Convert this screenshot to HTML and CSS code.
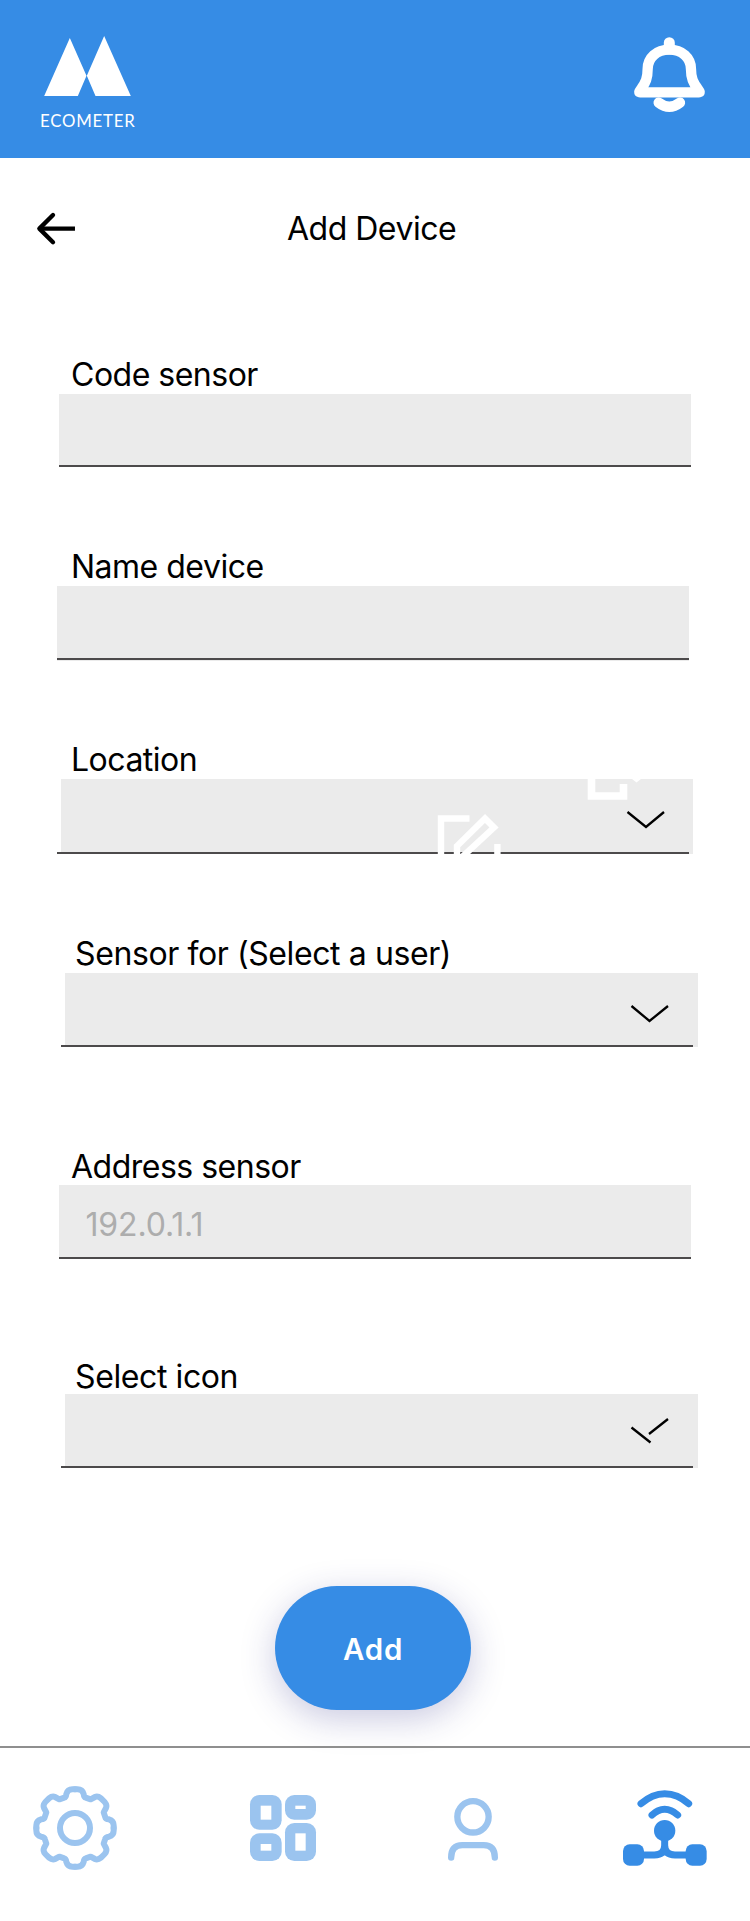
FILE: index.html
```html
<!DOCTYPE html>
<html lang="en">
<head>
<meta charset="utf-8">
<title>Add Device</title>
<link rel="stylesheet" href="styles.css">
</head>
<body>
<header class="topbar">
  <div class="brand">
    <svg class="brand-mark" viewBox="0 0 260 180"><path d="M77 6L127 119L101 180H0ZM180 0L260 180H154L128 119Z" fill="#fff"/></svg>
    <span class="brand-name">ECOMETER</span>
  </div>
  <svg class="bell" viewBox="0 0 214 226" fill="none" stroke="#fff" stroke-linecap="round" stroke-linejoin="round">
    <path d="M106 17V36" stroke-width="33"/>
    <path d="M106 38C68 38 41 62 41 96C41 124 35 137 22 155C12 168 16 166 22 166H191C197 166 201 168 191 155C178 137 171 124 171 96C171 62 144 38 106 38Z" stroke-width="31"/>
    <path d="M74 197Q106 222 138 197" stroke-width="31"/>
  </svg>
</header>
<main class="page">
  <div class="heading">
    <svg class="back" viewBox="0 0 114 94" fill="none" stroke="#000" stroke-width="13"><path d="M8 47H114"/><path d="M48 6L7 47L48 88" stroke-linecap="round" stroke-linejoin="round"/></svg>
    <h1 class="title">Add Device</h1>
  </div>
  <form class="form">
    <div class="field field-code"><label class="label">Code sensor</label><div class="box"></div></div>
    <div class="field field-name"><label class="label">Name device</label><div class="box"></div></div>
    <div class="field field-location"><label class="label">Location</label>
      <div class="box">
        <svg class="art" viewBox="0 0 633 75" fill="none">
          <g stroke="#fff" stroke-width="6.4"><path d="M408.500 39.500H380V80"/><path d="M436.400 80V65"/><path d="M396 82V67L424 39.500L433 48.500L400 79"/></g>
          <g stroke="#fff" stroke-width="7.600"><path d="M530.500 0V17H562.500V5"/></g>
          <path d="M571 0H580L575.500 3.500Z" fill="#fff"/>
          <path d="M566.500 33L585 48L603 33" stroke="#000" stroke-width="2.300"/>
        </svg>
      </div>
    </div>
    <div class="field field-user"><label class="label">Sensor for (Select a user)</label>
      <div class="box"><svg class="art" viewBox="0 0 633 75" fill="none"><path d="M566.500 33L584.500 48L603 33" stroke="#000" stroke-width="2.300"/></svg></div>
    </div>
    <div class="field field-address"><label class="label">Address sensor</label><div class="box"><span class="placeholder">192.0.1.1</span></div></div>
    <div class="field field-icon"><label class="label">Select icon</label>
      <div class="box"><svg class="art" viewBox="0 0 633 75" fill="none"><path d="M566.500 33.500L585.500 48.500M584 40L603 25" stroke="#000" stroke-width="2.300"/></svg></div>
    </div>
  </form>
  <button class="add" type="button">Add</button>
</main>
<nav class="nav">
  <svg class="gear" viewBox="-126 -126 252 252" fill="none" stroke="#9bc4ef" stroke-width="18" stroke-linejoin="round" stroke-linecap="round">
    <defs><path id="teeth" d="M0-116H8Q22-116 26-102Q27-92 32-91L47-86L60-93Q68-97 78-89L89-78Q97-68 93-60L86-47L91-32Q92-27 102-26Q116-22 116-8V0"/></defs>
    <circle r="45"/>
    <use href="#teeth"/><use href="#teeth" transform="rotate(90)"/><use href="#teeth" transform="rotate(180)"/><use href="#teeth" transform="rotate(270)"/>
  </svg>
  <svg class="tiles" viewBox="0 0 198 198" fill="#9bc4ef">
    <rect width="95" height="104" rx="28"/><rect x="105" width="93" height="74" rx="28"/><rect y="115" width="95" height="83" rx="28"/><rect x="105" y="84" width="93" height="114" rx="28"/>
    <g fill="#fff"><rect x="32" y="32" width="32" height="42"/><rect x="136" y="32" width="31" height="10"/><rect x="32" y="147" width="32" height="20"/><rect x="136" y="115" width="31" height="52"/></g>
  </svg>
  <svg class="person" viewBox="0 0 150 188" fill="none" stroke="#9bc4ef" stroke-width="19" stroke-linecap="round"><circle cx="75" cy="56" r="47"/><path d="M9.500 178Q9.500 141 43 141H107Q140.500 141 140.500 178"/></svg>
  <svg class="network" viewBox="0 0 252 228" fill="none" stroke="#368ce5" stroke-width="21" stroke-linecap="round">
    <path d="M54 41Q88 11 125 11Q164 11 197 41M87 75Q105 58 125 58Q145 58 164 75"/>
    <path d="M125 122V166Q125 195 94 195H40M125 166Q125 195 156 195H210"/>
    <g fill="#368ce5" stroke="none"><circle cx="125" cy="122" r="32"/><rect y="163" width="63" height="64" rx="20"/><rect x="188" y="163" width="63" height="64" rx="20"/></g>
  </svg>
</nav>
</body>
</html>
```
FILE: styles.css
```css
* { box-sizing: border-box; }
body { margin: 0; width: 750px; height: 1921px; background: #fff; color: #000; font-family: Inter, sans-serif; overflow: hidden; }
svg { display: block; overflow: visible; }
.topbar { height: 158px; padding: 36px 45px 0 40px; display: flex; justify-content: space-between; background: #368ce5; color: #fff; }
.brand { width: 96px; }
.brand-mark { width: 87px; height: 60px; margin-left: 4px; }
.brand-name { display: block; margin-top: 15px; font: 400 16.8px/20px Lato, sans-serif; letter-spacing: .8px; white-space: nowrap; }
.bell { width: 71.3px; height: 75.3px; margin-top: 1px; }
.page { height: 1588px; display: flex; flex-direction: column; }
.heading { height: 196px; padding: 50px 37px 0; display: grid; grid-template-columns: 250px 1fr; align-items: start; }
.back { width: 38px; height: 31.300px; margin-top: 5px; }
.title { margin: 0; padding-top: 1px; font-size: 32px; font-weight: 400; line-height: 40px; letter-spacing: -.5px; white-space: nowrap; }
.form { height: 1232px; display: grid; grid-template-rows: 192px 193px 194px 212px 209px 115px; align-content: start; }
.label { display: block; height: 40px; padding: 1px 0 0 71px; font-size: 32px; line-height: 40px; letter-spacing: -.5px; white-space: nowrap; }
.box { position: relative; width: 632.500px; height: 74px; margin-left: 58.500px; background: #ebebeb; }
.box::after { content: ""; position: absolute; left: 0; bottom: 0; width: 632px; height: 2px; background: #4c4a4b; }
.art { position: absolute; z-index: 1; left: 0; top: 0; width: 633px; height: 75px; overflow: hidden; }
.field-code .box { height: 73px; }
.field-name .box { height: 75px; margin-left: 56.500px; }
.field-name .box::after { bottom: 1px; }
.field-location .box { height: 75px; margin-left: 60.500px; }
.field-location .box::after { left: -3.500px; bottom: 0; }
.field-user .label, .field-icon .label { padding-left: 75px; letter-spacing: -.4px; }
.field-user .box, .field-icon .box { margin-left: 65px; width: 633px; }
.field-user .box::after, .field-icon .box::after { left: -4px; }
.field-address .label { padding-top: 2px; }
.field-address .box { height: 74px; padding: 20px 27px; }
.field-icon .label { padding-top: 3px; }
.placeholder { display: block; font-size: 32px; line-height: 40px; letter-spacing: -.15px; color: #adadad; }
.add { width: 196px; height: 124px; margin-left: 275px; padding: 1px 0 0; border: 0; border-radius: 62px; background: #368ce5; color: #fff; font: 600 29.500px/40px Inter, sans-serif; letter-spacing: .800px; box-shadow: 0 9px 34px rgba(45,42,135,.25); }
.nav { position: relative; height: 175px; padding: 2px 0 15px 33px; border-top: 2px solid #8f8f8f; display: grid; grid-template-columns: 217px 198px 175px 1fr; align-items: center; }
.gear { width: 84px; height: 84px; margin-top: -1px; }
.tiles { width: 66px; height: 66px; margin-top: -1px; }
.person { width: 50px; height: 63px; margin-top: 2px; }
.network { width: 84px; height: 76px; }
```
